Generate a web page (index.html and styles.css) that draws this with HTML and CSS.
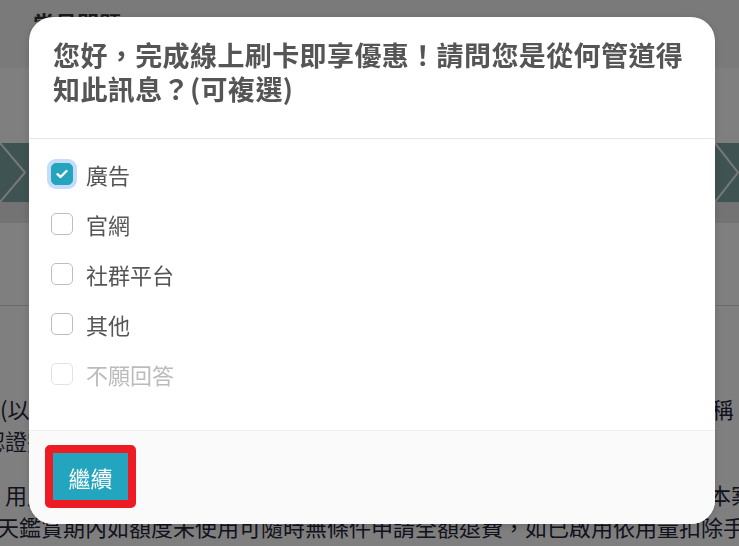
FILE: index.html
```html
<!DOCTYPE html>
<html lang="zh-Hant">
<head>
  <meta charset="utf-8">
  <title>常見問題</title>
  <link rel="stylesheet" href="styles.css">
</head>
<body>
  <div class="page">
    <div class="page-header">常見問題</div>

    <div class="steps">
      <svg class="step-arrow" viewBox="0 0 28 59"><polyline points="0,0 25,29.5 0,59"/></svg>
      <svg class="step-arrow step-arrow-right" viewBox="0 0 24 59"><polyline points="0,0 23,29.5 0,59"/></svg>
    </div>
    <div class="steps-foot"></div>
    <div class="rule"></div>

    <div class="terms">
      <p>
        <span class="line">(以下簡稱本服務）係由本公司所提供之線上刷卡付款服務功能，以下再統稱<em>「</em></span>
        <span class="line line-shift">認證完成後即可開始使用。</span>
      </p>
      <p>
        <span class="line line-indent">用戶於完成線上刷卡付款後，系統即會自動開通所購買之方案服務內容，本案</span>
        <span class="line line-back">天鑑賞期內如額度未使用可隨時無條件申請全額退費，如已啟用依用量扣除手續費</span>
      </p>
    </div>
  </div>

  <div class="overlay">
    <div class="modal">
      <div class="modal-header">
        <h2 class="modal-title">您好，完成線上刷卡即享優惠！請問您是從何管道得知此訊息？(可複選)</h2>
      </div>

      <div class="modal-body">
        <label class="option">
          <input type="checkbox" checked>
          <span class="box focus">
            <svg viewBox="0 0 12 10"><polyline points="1.5,5.2 4.6,8 10.5,2"/></svg>
          </span>
          廣告
        </label>
        <label class="option">
          <input type="checkbox">
          <span class="box"></span>
          官網
        </label>
        <label class="option">
          <input type="checkbox">
          <span class="box"></span>
          社群平台
        </label>
        <label class="option">
          <input type="checkbox">
          <span class="box"></span>
          其他
        </label>
        <label class="option disabled">
          <input type="checkbox" disabled>
          <span class="box"></span>
          不願回答
        </label>
      </div>

      <div class="modal-footer">
        <span class="mark">
          <button class="btn">繼續</button>
        </span>
      </div>
    </div>
  </div>
</body>
</html>
```

FILE: styles.css
```css
/* page under the dialog */

* {
  box-sizing: border-box;
}

html,
body {
  margin: 0;
  height: 100%;
}

body {
  font-family: "Noto Sans CJK TC", "Noto Sans", sans-serif;
  background: #fff;
  color: #26263a;
  overflow: hidden;
}

.page-header {
  height: 68px;
  padding: 6px 0 0 33px;
  background: #f4f4f4;
  font-size: 22px;
  font-weight: 700;
  line-height: 32px;
  color: #333;
}

.steps {
  margin-top: 75px;
  height: 59px;
  background: #7ea6a6;
  display: flex;
  justify-content: space-between;
}

.step-arrow {
  width: 28px;
  height: 59px;
  fill: none;
  stroke: #f0f0f0;
  stroke-width: 2;
}

.step-arrow-right {
  width: 24px;
}

.steps-foot {
  height: 21px;
  background: #e6e6e6;
}

.rule {
  margin-top: 82px;
  border-top: 1px solid #c4dde6;
}

.terms {
  padding-top: 86px;
  font-size: 22px;
  line-height: 32px;
}

.terms p {
  margin: 0 0 22px;
}

.line {
  display: block;
  white-space: nowrap;
}

.line em {
  font-style: normal;
  color: #e08a1e;
}

.line-shift {
  margin-left: -17px;
}

.line-indent {
  margin-left: 5px;
}

.line-back {
  margin-left: -3px;
}

/* dialog */

.overlay {
  position: fixed;
  top: 0;
  left: 0;
  right: 0;
  bottom: 0;
  background: rgba(0, 0, 0, 0.5);
  padding: 17px 24px 0 29px;
}

.modal {
  background: #fff;
  border-radius: 24px;
  overflow: hidden;
  color: #555;
  box-shadow: 0 2px 8px rgba(0, 0, 0, 0.15);
}

.modal-header {
  padding: 21px 24px 32px;
  border-bottom: 1px solid #e6e6e6;
}

.modal-title {
  margin: 0;
  font-size: 27px;
  line-height: 34px;
  letter-spacing: 0.4px;
  font-weight: 700;
  color: #555;
}

.modal-body {
  padding: 10px 22px 31px;
}

.option {
  display: flex;
  align-items: center;
  gap: 13px;
  height: 50px;
  font-size: 22px;
  color: #555;
  cursor: pointer;
}

.option input {
  display: none;
}

.box {
  width: 22px;
  height: 22px;
  border: 1px solid #bdbdbd;
  border-radius: 5px;
  background: #fff;
  display: flex;
  align-items: center;
  justify-content: center;
}

.box svg {
  width: 12px;
  height: 10px;
  fill: none;
  stroke: #fff;
  stroke-width: 2.4;
  stroke-linecap: round;
  stroke-linejoin: round;
}

.box.focus {
  background: #25a4be;
  border-color: #25a4be;
  box-shadow: 0 0 0 4px #c5dcfa;
}

.option.disabled {
  color: #bbb;
  cursor: default;
}

.option.disabled .box {
  border-color: #e2e2e2;
}

.modal-footer {
  padding: 14px 16px 16px;
  background: #fafafa;
  border-top: 1px solid #eeeeee;
}

.mark {
  display: flex;
  width: fit-content;
  border: 8px solid #ed1c24;
  border-radius: 5px;
}

.btn {
  width: 75px;
  height: 47px;
  padding: 0;
  border: none;
  background: #23a5bf;
  color: #fff;
  font-family: inherit;
  font-size: 22px;
  cursor: pointer;
}
```
